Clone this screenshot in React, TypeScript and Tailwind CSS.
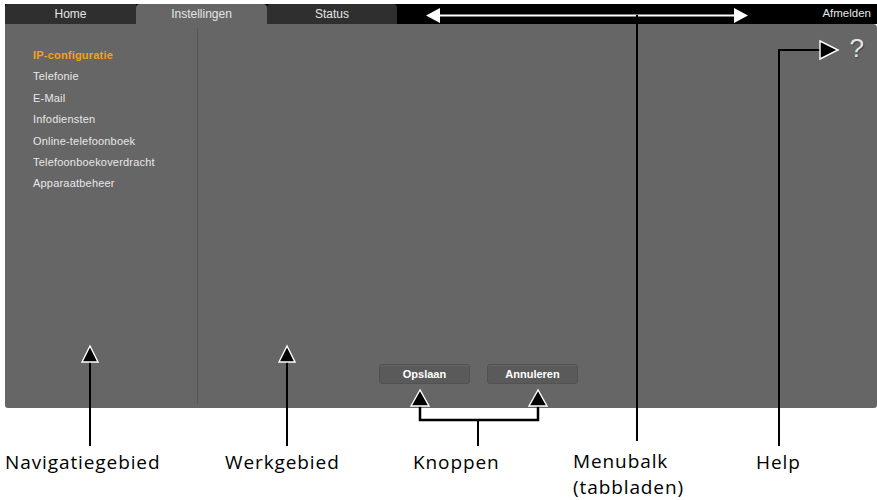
import React from "react";

const ui = { fontFamily: '"Liberation Sans", Arial, sans-serif' };
const lab = { fontFamily: '"Open Sans", "Noto Sans", sans-serif' };

const navItems = [
  "Telefonie",
  "E-Mail",
  "Infodiensten",
  "Online-telefoonboek",
  "Telefoonboekoverdracht",
  "Apparaatbeheer",
];

function Overlay() {
  const bk = { fill: "#000", stroke: "#fff", strokeWidth: 1.4, strokeLinejoin: "miter" as const };
  return (
    <svg className="absolute inset-0 pointer-events-none" width={877} height={500} viewBox="0 0 877 500">
      {/* Navigatiegebied */}
      <line x1={90} y1={360} x2={90} y2={446} stroke="#000" strokeWidth={2} />
      <polygon points="90,346 82,362 98,362" {...bk} />
      {/* Werkgebied */}
      <line x1={287} y1={360} x2={287} y2={446} stroke="#000" strokeWidth={2} />
      <polygon points="287,346 279,362 295,362" {...bk} />
      {/* Knoppen */}
      <polyline points="420,404 420,420 538,420 538,404" fill="none" stroke="#000" strokeWidth={2.5} />
      <line x1={478} y1={420} x2={478} y2={446} stroke="#000" strokeWidth={2} />
      <polygon points="420,390 411,406 429,406" {...bk} />
      <polygon points="538,390 529,406 547,406" {...bk} />
      {/* Menubalk */}
      <line x1={440} y1={15.5} x2={734} y2={15.5} stroke="#fff" strokeWidth={2} />
      <polygon points="426,15.5 440,8 440,23" fill="#fff" />
      <polygon points="748,15.5 734,8 734,23" fill="#fff" />
      <line x1={637} y1={15} x2={637} y2={441} stroke="#000" strokeWidth={2} />
      {/* Help */}
      <polyline points="779,446 779,50 822,50" fill="none" stroke="#000" strokeWidth={2} />
      <polygon points="820,41 838,50 820,59" {...bk} />
    </svg>
  );
}

export default function App() {
  return (
    <div className="relative w-[877px] h-[500px] bg-white overflow-hidden">
      <div className="pt-[4px] pl-[5px]">
        {/* Tab bar */}
        <div className="flex h-[20px] bg-black text-[12px] text-[#e6e6e6]" style={ui}>
          <div className="w-[131px] bg-[#2f2f2f] rounded-tl-[3px] flex items-center justify-center">Home</div>
          <div className="w-[131px] bg-[#666666] rounded-t-[4px] flex items-center justify-center">Instellingen</div>
          <div className="w-[130px] bg-[#2f2f2f] rounded-t-[4px] flex items-center justify-center">Status</div>
          <div className="flex-1 flex items-start justify-end pr-[6px] pt-[1px] text-[11.5px]">Afmelden</div>
        </div>
        {/* Panel */}
        <div className="flex h-[384px] bg-[#666666] rounded-tr-[4px] rounded-b-[3px]">
          <div className="w-[193px] py-[4px] flex">
            <div className="flex-1 pl-[28px] pt-[17px] text-[11px] leading-[21.4px] tracking-[0.2px] text-[#e8e8e8]" style={ui}>
              <div className="font-bold text-[#f5a214]">IP-configuratie</div>
              {navItems.map((n) => (
                <div key={n}>{n}</div>
              ))}
            </div>
            <div className="w-px bg-[#555555]" />
          </div>
          <div className="flex-1 flex flex-col">
            <div className="flex justify-end pr-[13px] pt-[9px]">
              <span className="text-[26px] leading-[30px] text-[#e4e4e4] [text-shadow:1px_1px_1px_rgba(0,0,0,0.35)]" style={ui}>?</span>
            </div>
            <div className="flex-1" />
            <div className="flex gap-[17px] pl-[181px] pb-[24px]" style={ui}>
              <div className="w-[91px] h-[20px] rounded-[3px] bg-[#5a5a5a] border border-[#525252] shadow-[inset_0_1px_0_rgba(255,255,255,0.08)] flex items-center justify-center text-[11px] font-bold text-white">Opslaan</div>
              <div className="w-[91px] h-[20px] rounded-[3px] bg-[#5a5a5a] border border-[#525252] shadow-[inset_0_1px_0_rgba(255,255,255,0.08)] flex items-center justify-center text-[11px] font-bold text-white">Annuleren</div>
            </div>
          </div>
        </div>
      </div>

      {/* Annotation labels */}
      <div className="absolute left-[5px] top-[449px] text-[19px] leading-[26px] tracking-[0.9px] text-black" style={lab}>Navigatiegebied</div>
      <div className="absolute left-[225px] top-[449px] text-[19px] leading-[26px] tracking-[0.9px] text-black" style={lab}>Werkgebied</div>
      <div className="absolute left-[413px] top-[449px] text-[19px] leading-[26px] tracking-[0.9px] text-black" style={lab}>Knoppen</div>
      <div className="absolute left-[573px] top-[448px] text-[19px] leading-[26px] tracking-[0.9px] text-black" style={lab}>
        <div>Menubalk</div>
        <div>(tabbladen)</div>
      </div>
      <div className="absolute left-[756px] top-[449px] text-[19px] leading-[26px] tracking-[0.9px] text-black" style={lab}>Help</div>

      <Overlay />
    </div>
  );
}
